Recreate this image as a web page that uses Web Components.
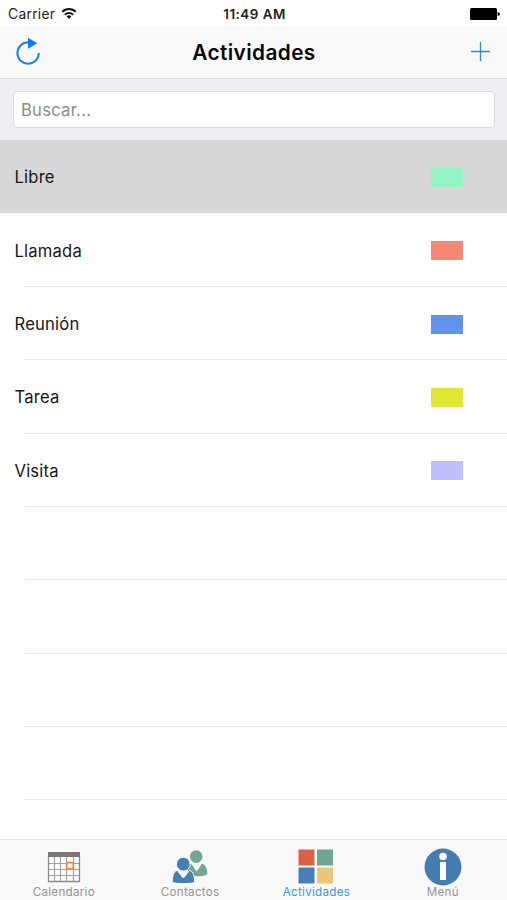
<!DOCTYPE html>
<html lang="es"><head><meta charset="utf-8"><title>Actividades</title>
<style>html,body{margin:0;height:100%;overflow:hidden;background:#fff}</style></head>
<body>
<app-screen>
  <status-bar slot="top"></status-bar>
  <nav-bar slot="top">Actividades</nav-bar>
  <search-box slot="top" placeholder="Buscar..."></search-box>
  <activity-row selected color="#93f5c3">Libre</activity-row>
  <activity-row color="#f88876">Llamada</activity-row>
  <activity-row color="#6094ec">Reunión</activity-row>
  <activity-row color="#e0e834">Tarea</activity-row>
  <activity-row color="#c0beff">Visita</activity-row>
  <activity-row></activity-row><activity-row></activity-row><activity-row></activity-row><activity-row></activity-row><activity-row></activity-row>
  <tab-bar slot="bottom">
    <tab-item label="Calendario">
      <svg width="34" height="32" viewBox="0 0 34 32"><path d="M1.500 2h31v29h-31z" fill="#fff"/><path d="M1.500 12.500h31M1.500 18.500h31M1.500 24.500h31M7.500 6v25M13.500 6v25M19.500 6v25M26.500 6v25" fill="none" stroke="#a3a3a3" stroke-width="1.200"/><path d="M1 1h32v5H1z" fill="#777"/><path d="M1.500 6v24.500h31V6" fill="none" stroke="#888" stroke-width="1.300"/><rect x="19.800" y="11.500" width="6.500" height="6.500" fill="#fff" stroke="#f58142" stroke-width="1.700"/></svg>
    </tab-item>
    <tab-item label="Contactos">
      <svg width="36" height="34" viewBox="0 0 36 34"><g fill="#70a692"><circle cx="24.200" cy="6.600" r="6.300"/><path d="M16 25.500V16c.8-1 1.800-1.800 3.200-2.300l5.500 7.800 5.300-7.800c3.800 1 5.300 5 5.300 10 0 1.500-4 2.500-10 2.500z"/></g><g fill="#447fb6" stroke="#f9f9f9" stroke-width="1"><circle cx="11.300" cy="14.200" r="6.900"/><path d="M.3 32.300c0-6.300 1.300-10.500 4.700-12l6.300 7.700 6.300-7.700c3.700 1.500 5 5.700 5 12-2 1.700-20.300 1.700-22.300 0z"/></g></svg>
    </tab-item>
    <tab-item label="Actividades" active>
      <svg width="36" height="36" viewBox="0 0 36 36"><path d="M.5.5h16v16H.5z" fill="#d96244"/><path d="M19 .5h16v16H19z" fill="#70a692"/><path d="M.5 18.500h16v16H.5z" fill="#497fb6"/><path d="M19 18.500h16v16H19z" fill="#ebc77c"/></svg>
    </tab-item>
    <tab-item label="Menú">
      <svg width="38" height="38" viewBox="0 0 38 38"><circle cx="19" cy="19" r="18.500" fill="#467cb1"/><circle cx="19" cy="8.500" r="3.800" fill="#fff"/><path d="M16 14h6v18h-6z" fill="#fff"/></svg>
    </tab-item>
  </tab-bar>
</app-screen>
<script>
class Base extends HTMLElement{
  connectedCallback(){ if(!this.shadowRoot) this.attachShadow({mode:'open'}).innerHTML=this.render(); }
}
customElements.define('app-screen',class extends Base{render(){return `
<style>:host{display:flex;flex-direction:column;width:507px;height:900px;overflow:hidden;background:#fff;color:#161616;font-family:Inter,"Liberation Sans",sans-serif}
main{flex:1;min-height:0;overflow:hidden}header,footer{flex:none}</style>
<header><slot name="top"></slot></header><main><slot></slot></main><footer><slot name="bottom"></slot></footer>`}});
customElements.define('status-bar',class extends Base{render(){return `
<style>:host{display:grid;grid-template-columns:1fr auto 1fr;align-items:center;height:26px;padding:1px 7px 0 8px;box-sizing:border-box;font-size:13.800px;line-height:26px;color:#222}
.l{display:flex;align-items:center;gap:6px;letter-spacing:.3px}.t{font-weight:600;font-size:13.400px;letter-spacing:.5px;margin-left:1px}.b{justify-self:end}svg{display:block}.w{margin-top:-2px}</style>
<div class="l"><span>Carrier</span><svg class="w" width="16" height="12" viewBox="0 0 16 12"><g fill="none" stroke="#111" stroke-width="2"><path d="M1.200 4.800a9.600 9.600 0 0 1 13.600 0"/><path d="M3.900 7.700a5.800 5.800 0 0 1 8.200 0"/></g><path d="M8 11.800L5.600 9.400a3.400 3.400 0 0 1 4.800 0z" fill="#111"/></svg></div>
<span class="t">11:49 AM</span>
<svg class="b" width="30" height="12" viewBox="0 0 30 12"><rect width="27" height="12" rx="1.500" fill="#000"/><path d="M27.700 4q2.300.500 2.300 2t-2.300 2z" fill="#000"/></svg>`}});
customElements.define('nav-bar',class extends Base{render(){return `
<style>:host{display:grid;grid-template-columns:1fr auto 1fr;align-items:center;height:53px;box-sizing:border-box;padding:0 17px 0 16px;background:#f9f9f9;border-bottom:1px solid #dfdfe1;font-size:20.800px;font-weight:600;color:#080808}
.plus{justify-self:end;margin-top:-1px}svg{display:block}span{letter-spacing:.4px;margin-left:2px}</style>
<svg width="26" height="30" viewBox="0 0 26 30"><path d="M12.500 5.300A10.700 10.700 0 1 0 22.800 16" fill="none" stroke="#1a7ff5" stroke-width="2"/><path d="M12 .8v11l9.300-5.500z" fill="#0a78fa"/></svg>
<span><slot></slot></span>
<svg class="plus" width="19" height="19" viewBox="0 0 19 19"><path d="M9.500 0v19M0 9.500h19" stroke="#2a86f5" stroke-width="1.300"/></svg>`}});
customElements.define('search-box',class extends Base{render(){return `
<style>:host{display:block;height:61px;box-sizing:border-box;padding:12px 12px 0 13px;background:#efeff3}
div{height:37px;box-sizing:border-box;border:1px solid #d9d9dd;border-radius:5px;background:#fff;padding-left:7px;line-height:37px;font-size:16.600px;color:#8c8c8c;letter-spacing:.25px}</style>
<div>${this.getAttribute('placeholder')}</div>`}});
customElements.define('activity-row',class extends Base{render(){const c=this.getAttribute('color');return `
<style>:host{display:flex;position:relative;align-items:center;justify-content:space-between;height:73.300px;box-sizing:border-box;padding:0 44px 0 14.500px;font-size:16.600px;letter-spacing:.2px}
:host([selected]){background:#d8d8d8}
:host(:not([selected]))::after{content:"";position:absolute;left:25px;right:0;bottom:-.6px;height:1px;background:#e8e8ea}
span{padding-top:1.500px}i{width:32px;height:19px;background:${c};margin-top:2px}</style>
<span><slot></slot></span>${c?'<i></i>':''}`}});
customElements.define('tab-bar',class extends Base{render(){return `
<style>:host{display:grid;grid-template-columns:repeat(4,126.300px);height:61px;box-sizing:border-box;padding-left:.7px;background:#f9f9f9;border-top:1px solid #e2e2e2}</style><slot></slot>`}});
customElements.define('tab-item',class extends Base{render(){return `
<style>:host{display:flex;flex-direction:column;align-items:center;height:60px;color:#949494;font-size:11.600px;letter-spacing:.3px}
:host([active]){color:#3f92f5}.i{height:36px;padding-top:9px;display:flex;align-items:center;justify-content:center}::slotted(svg){display:block;flex:none}span{line-height:14px}</style>
<div class="i"><slot></slot></div><span>${this.getAttribute('label')}</span>`}});
</script>
</body></html>
